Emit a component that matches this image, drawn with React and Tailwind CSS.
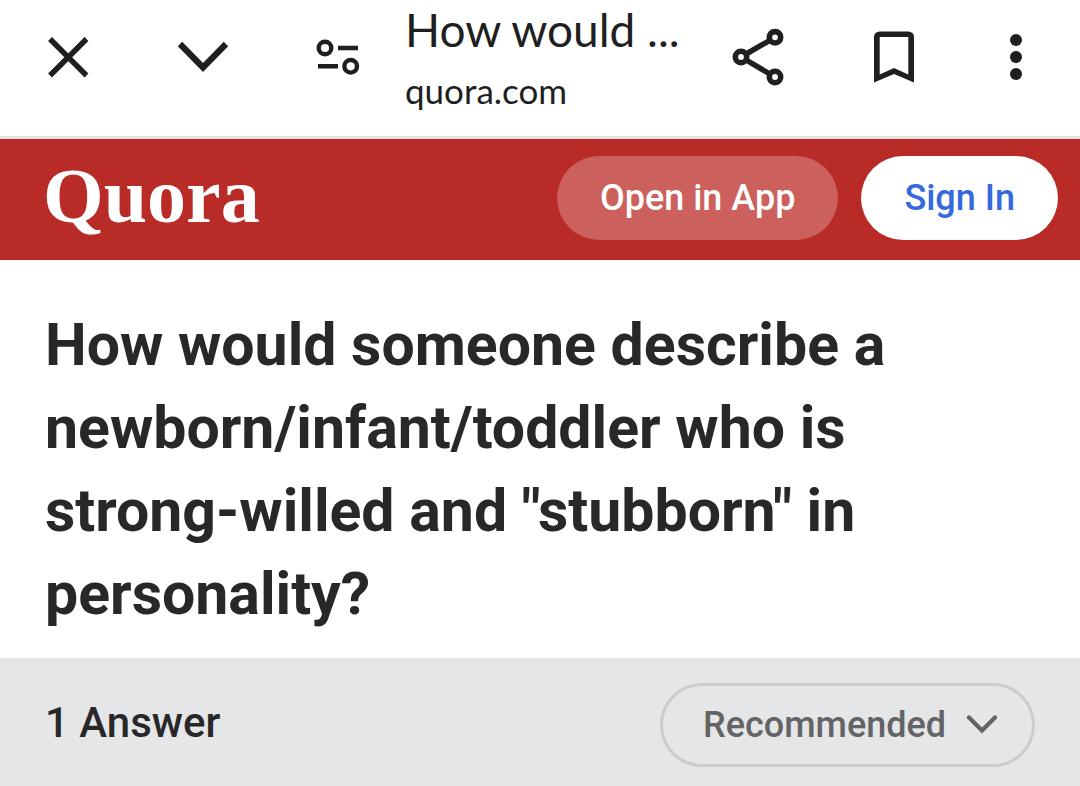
function IconButton({ label, children }) {
  return (
    <button type="button" aria-label={label} className="size-16 shrink-0 text-[#1f1f1f]">
      <svg viewBox="0 0 64 64" className="size-16" fill="none" stroke="currentColor" strokeWidth="5.5">
        {children}
      </svg>
    </button>
  );
}

function BrowserBar() {
  return (
    <header className="flex h-[139px] items-start border-b-3 border-[#ece4e4] bg-white pr-8 pl-9">
      <div className="flex shrink-0 gap-[71px] pt-[25px]">
        <IconButton label="Close">
          <path d="M14 14 50.500 50.500M50.500 14 14 50.500" />
        </IconButton>
        <IconButton label="Minimize">
          <path d="M9 19 32 42.500 55 19" strokeWidth="6.2" />
        </IconButton>
        <IconButton label="Site settings">
          <circle cx="19" cy="23" r="6.300" strokeWidth="4.4" />
          <circle cx="44.700" cy="41.300" r="6.300" strokeWidth="4.4" />
          <path d="M32 23H52M12 41.300H32" strokeWidth="4.4" />
        </IconButton>
      </div>
      <div className="ml-[35px] min-w-0 flex-1 font-[Lato,sans-serif] whitespace-nowrap text-[#1f1f1f]">
        <p className="pt-0.5 text-[46px] leading-[56px]">How would ...</p>
        <p className="pt-2 text-[35px] leading-[48px]">quora.com</p>
      </div>
      <div className="flex shrink-0 gap-[72px] pt-[25px]">
        <IconButton label="Share">
          <path d="M15 32 49 12.300M15 32 49 52" />
          <circle cx="15" cy="32" r="5.700" fill="white" strokeWidth="5.600" />
          <circle cx="49" cy="12.300" r="5.700" fill="white" strokeWidth="5.600" />
          <circle cx="49" cy="52" r="5.700" fill="white" strokeWidth="5.600" />
        </IconButton>
        <IconButton label="Bookmark">
          <path
            fill="currentColor"
            stroke="none"
            fillRule="evenodd"
            d="M12 57.500V12a5.500 5.500 0 0 1 5.500-5.500h29a5.500 5.500 0 0 1 5.500 5.500v45.500L32 49zM17.700 49.500 32 43l14.300 6.500V12H17.700z"
          />
        </IconButton>
      </div>
      <div className="ml-[58px] pt-[25px]">
        <IconButton label="More options">
          <g fill="currentColor" stroke="none">
            <circle cx="32" cy="15" r="6" />
            <circle cx="32" cy="32" r="6" />
            <circle cx="32" cy="49" r="6" />
          </g>
        </IconButton>
      </div>
    </header>
  );
}

function SiteBar() {
  return (
    <nav className="flex items-start justify-between bg-[#b82b27] pt-[17px] pr-[22px] pb-5 pl-[43px]">
      <a href="#home" className="font-['Liberation_Serif',serif] text-[78px] leading-[80px] font-bold text-white">
        Quora
      </a>
      <div className="flex gap-[23px] text-[36px] leading-[84px] font-medium">
        <button type="button" className="rounded-full bg-[#cb605d] px-[43px] text-white">
          Open in App
        </button>
        <button type="button" className="rounded-full bg-white px-[43px] text-[#3569de]">
          Sign In
        </button>
      </div>
    </nav>
  );
}

export default function App() {
  return (
    <div className="flex min-h-screen flex-col bg-white font-[Roboto,sans-serif]">
      <BrowserBar />
      <SiteBar />
      <main className="flex flex-1 flex-col">
        <h1 className="px-[45px] pt-[43px] pb-[23px] text-[59px] leading-[83px] font-bold text-[#282829]">
          How would someone describe a newborn/infant/toddler who is strong-willed and "stubborn" in personality?
        </h1>
        <section className="flex flex-1 items-start justify-between bg-[#e5e6e8] pt-[25px] pr-[45px] pb-5 pl-[45px]">
          <h2 className="text-[42px] leading-[80px] font-medium text-[#282829]">1 Answer</h2>
          <div className="relative text-[#636466]">
            <select
              aria-label="Sort answers"
              className="h-[84px] appearance-none rounded-full border-3 border-[#cbcccd] bg-transparent pr-[85px] pl-[40px] text-[36px] font-medium"
            >
              <option>Recommended</option>
            </select>
            <svg
              viewBox="0 0 32 20"
              className="pointer-events-none absolute top-8 right-[37px] h-5 w-8"
              fill="none"
              stroke="currentColor"
              strokeWidth="4.2"
              strokeLinecap="round"
            >
              <path d="M3 2.500 16 15.500 29 2.500" />
            </svg>
          </div>
        </section>
      </main>
    </div>
  );
}
